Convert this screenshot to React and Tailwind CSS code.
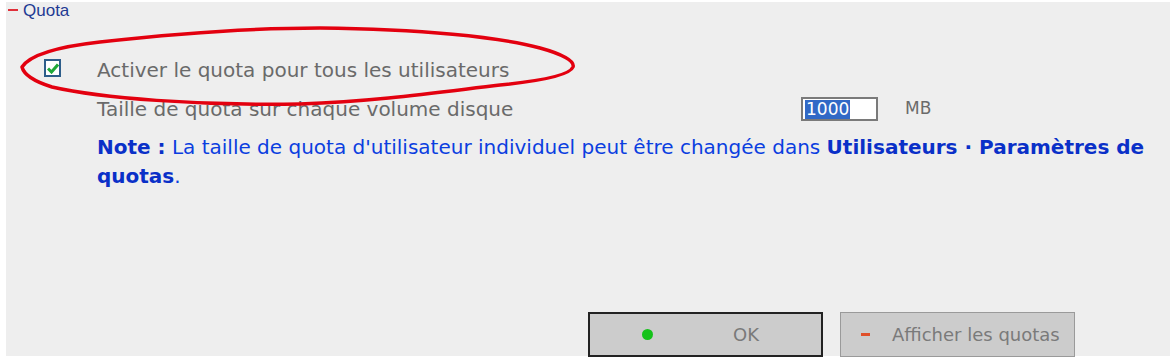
import React from 'react'

const font = { fontFamily: '"DejaVu Sans", Verdana, sans-serif' }

const Ellipse = () => (
  <svg className="absolute left-0 top-0 pointer-events-none" width="600" height="120" viewBox="0 0 600 120">
    <path
      d="M 16 65 C 24 53, 49 45, 94 40 C 174 31, 254 26, 314 26 C 414 27, 494 35, 534 46 C 556 52, 569 59, 567 65 C 564 73, 534 79, 494 83 C 434 90, 374 99, 294 102 C 194 104, 94 96, 46 85 C 30 80, 18 73, 16 65 Z"
      fill="none"
      stroke="#e3000f"
      strokeWidth="3.5"
      strokeLinejoin="round"
    />
  </svg>
)

export default function App() {
  return (
    <div className="w-[1170px] h-[359px] bg-white pl-[6px] pt-[5px] overflow-hidden" style={font}>
      <div className="relative h-full bg-[#eeeeee]">
        <Ellipse />

        {/* titre section */}
        <div className="flex items-center h-[16px] -mt-[3px] pl-[2px] text-[17px] leading-none" style={{ fontFamily: '"Liberation Sans", Arial, sans-serif' }}>
          <span className="w-[10px] h-[2px] bg-[#e0303a] mr-[5px]" />
          <span className="text-[#1f3a93]">Quota</span>
        </div>

        <div className="pl-[91px] pr-[6px] pt-[40px] text-[#6a6a6a]">
          <div className="relative flex items-center h-[24px] text-[20px]">
            <span className="absolute -left-[53px] top-[1px] w-[17px] h-[18px] border-2 border-[#2d5d8a] bg-white flex items-center justify-center">
              <svg width="12" height="11" viewBox="0 0 12 11">
                <path d="M1 5.5 L4.5 9 L11 1.5" fill="none" stroke="#1fa838" strokeWidth="3" />
              </svg>
            </span>
            Activer le quota pour tous les utilisateurs
          </div>

          <div className="flex items-center h-[24px] mt-[15px] text-[20px]">
            <span className="w-[704px]">Taille de quota sur chaque volume disque</span>
            <span className="w-[77px] h-[24px] border-2 border-[#7a7a7a] bg-white flex items-center pl-[2px] text-[17px]">
              <span className="bg-[#3169c6] text-white leading-[19px] px-[1px]">1000</span>
            </span>
            <span className="ml-[27px] text-[17px]">MB</span>
          </div>

          <p className="mt-[12px] text-[#0b3ee0] text-[20px] leading-[29px]">
            <b className="text-[#0a30c8]">Note :</b> La taille de quota d'utilisateur individuel peut être changée dans{' '}
            <b className="text-[#0a30c8]">Utilisateurs · Paramètres de quotas</b>.
          </p>
        </div>

        <div className="absolute left-[582px] top-[310px] flex gap-[17px] text-[18px] text-[#7a7a7a]">
          <button className="w-[235px] h-[45px] bg-[#cccccc] border-2 border-[#222] flex items-center">
            <span className="ml-[52px] w-[11px] h-[11px] rounded-full bg-[#15c21a]" />
            <span className="ml-[80px]">OK</span>
          </button>
          <button className="w-[235px] h-[45px] bg-[#cccccc] border border-[#9a9a9a] flex items-center">
            <span className="ml-[20px] w-[9px] h-[3px] bg-[#e0502a]" />
            <span className="ml-[22px]">Afficher les quotas</span>
          </button>
        </div>
      </div>
    </div>
  )
}
